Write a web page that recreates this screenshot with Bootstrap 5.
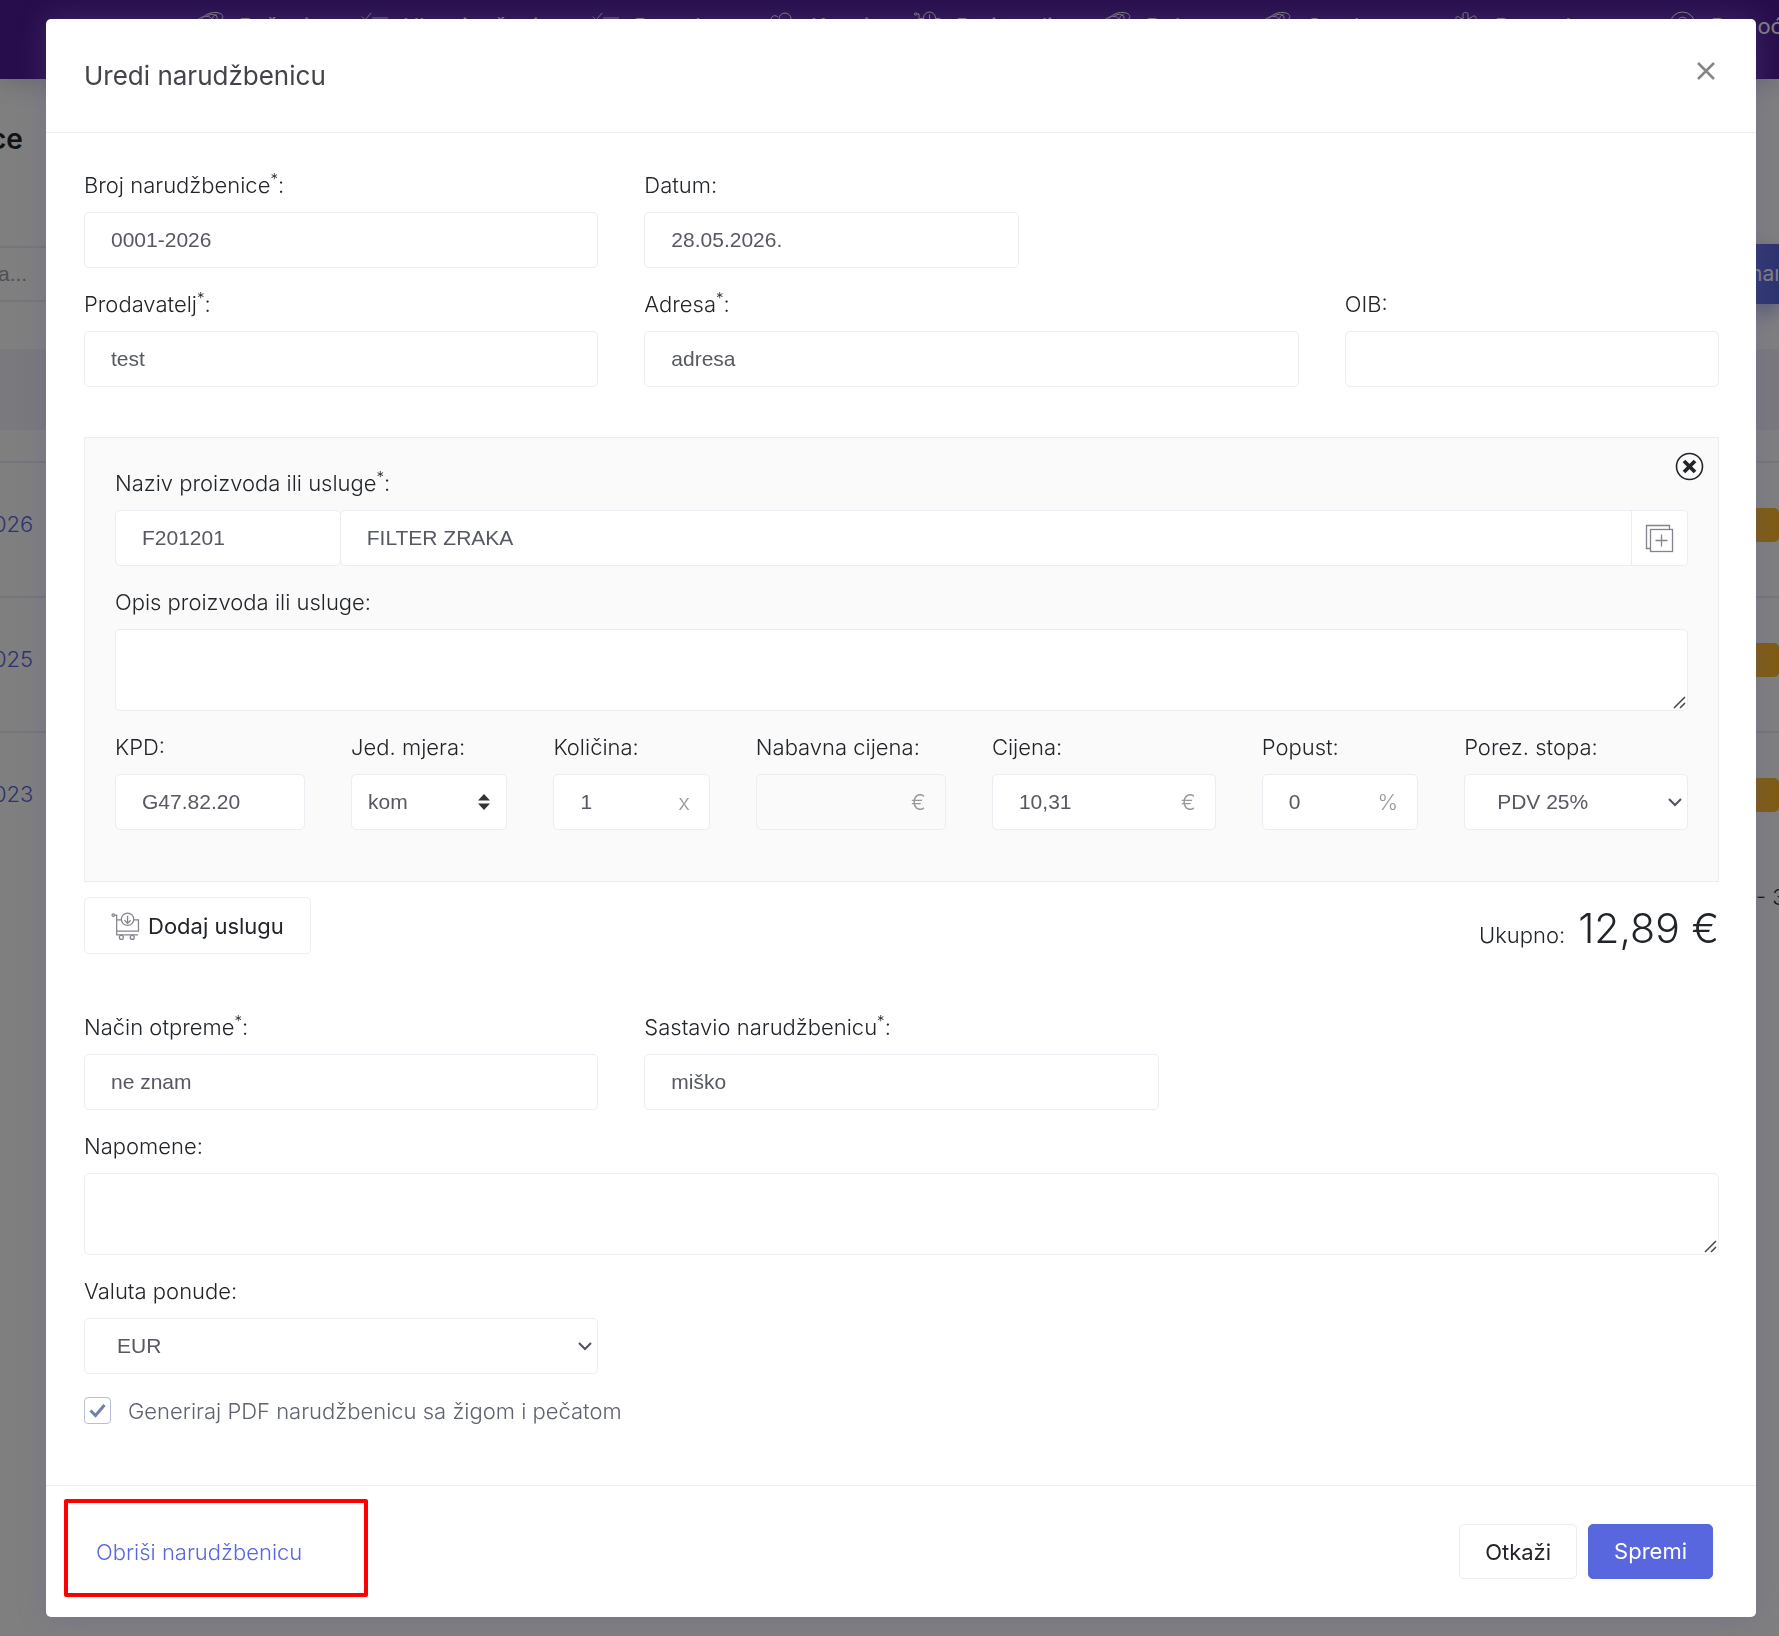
<!DOCTYPE html>
<html lang="hr">
<head>
<meta charset="utf-8">
<meta name="viewport" content="width=device-width, initial-scale=1">
<title>Uredi narudžbenicu</title>
<link href="https://cdn.jsdelivr.net/npm/bootstrap@5.3.0/dist/css/bootstrap.min.css" rel="stylesheet">
<style>
  body { font-family: Inter, "Open Sans", sans-serif; font-weight: 300; font-size: 22px; line-height: 30px; color: #212529; background: #fff; }
  svg { display: block; fill: none; stroke: currentColor; }

  /* page under the dialog */
  .page-under { height: 100vh; }
  .top-nav { background: #501a98; height: 79px; padding-left: 197px; color: #fff; font-weight: 400; display: grid; grid-template-columns: 164px 231px 177px 145px 190px 160px 189px 216px 110px; box-shadow: 0 4px 24px rgba(82, 63, 105, .25); }
  .top-nav a { color: #fff; padding-top: 11px; gap: 15px; font-size: 22px; white-space: nowrap; }
  .top-nav svg { width: 27px; height: 27px; flex: none; }
  .page-title { height: 119px; padding-top: 42px; margin-left: -10px; font-size: 28px; font-weight: 600; line-height: 36px; }
  .search-row { height: 151px; padding-top: 48px; }
  .search-strip { height: 56px; border-top: 2px solid #ebedf2; border-bottom: 2px solid #ebedf2; font: 400 21px/52px "Liberation Sans", Arial, sans-serif; color: #a0a0a8; }
  .search-strip span { margin-left: -2px; }
  .search-strip .btn { width: 30px; height: 60px; margin-top: -4px; background: #5867dd; color: #fff; border-radius: 0; padding: 0; font: 400 21px/58px Inter, sans-serif; box-shadow: 0 8px 20px rgba(88, 103, 221, .5); overflow: hidden; }
  .list-head { height: 81px; background: #f4f3fa; }
  .list-gap { height: 31px; }
  .list-line { height: 135px; border-top: 2px solid #ebeaf6; padding-bottom: 12px; }
  .list-line a { color: #5867dd; text-decoration: none; margin-left: -7px; }
  .pill { width: 24px; height: 34px; background: #ffb822; border-radius: 0 5px 5px 0; margin-top: 3px; }
  .list-foot { height: 108px; }
  .edge { width: 23px; overflow: hidden; white-space: nowrap; flex: none; }

  /* dialog */
  .modal-backdrop.show { opacity: .5; }
  .modal-dialog { max-width: none; margin: 19px 23px 20px 46px; }
  .modal-content { border: 0; border-radius: 5px; box-shadow: 0 0 30px rgba(100, 90, 150, .35); }
  .modal-header { padding: 38px 40px 37px 38px; border-bottom: 1px solid #ebedf2; align-items: flex-start; }
  .modal-title { font-size: 26px; line-height: 38px; font-weight: 400; color: #434349; }
  .close-x { padding: 0; border: 0; background: none; color: #858585; margin-top: 4px; }
  .modal-body { padding: 37px 37px 59px 38px; }
  .modal-footer { padding: 38px; padding-right: 43px; border-top: 1px solid #ebedf2; position: relative; }
  .modal-footer > * { margin: 0; }

  .row { --bs-gutter-x: 46px; }
  .field { margin-bottom: 21px; }
  .field label.cap { display: block; margin-bottom: 12px; white-space: nowrap; }
  .cap sup { font-size: 15px; line-height: 0; top: -9px; vertical-align: baseline; font-weight: 300; }
  .form-control, .form-select { height: 56px; border: 1px solid #ebedf2; border-radius: 5px; padding: 0 26px; font: 400 21px/54px "Liberation Sans", Arial, sans-serif; color: #575962; background-color: #fff; }
  textarea.form-control { height: 82px; padding: 12px 26px; line-height: 28px; }
  textarea::-webkit-resizer { background: url("data:image/svg+xml,%3Csvg xmlns='http://www.w3.org/2000/svg' viewBox='0 0 15 15'%3E%3Cpath d='M2 13L13 2M8 13l5-5' fill='none' stroke='%23444' stroke-width='1.500'/%3E%3C/svg%3E") center / contain no-repeat; }
  .form-control:disabled { background: #fafafa; }
  .form-select { padding-left: 32px; background-position: right 5px center; background-size: 14px 10px; background-image: url("data:image/svg+xml,%3Csvg xmlns='http://www.w3.org/2000/svg' viewBox='0 0 14 10'%3E%3Cpath d='M1 2l6 6 6-6' fill='none' stroke='%2350525c' stroke-width='2'/%3E%3C/svg%3E"); }
  .form-select.unit { padding-left: 16px; background-position: right 16px center; background-size: 12px 16px; background-image: url("data:image/svg+xml,%3Csvg xmlns='http://www.w3.org/2000/svg' viewBox='0 0 12 16'%3E%3Cpath d='M6 0l6 6.500H0zM6 16l6-6.500H0z' fill='%23333'/%3E%3C/svg%3E"); }
  .suffix { position: absolute; right: 20px; top: 13px; color: #999; }

  .item-box { background: #fafafa; border: 1px solid #ebedf2; padding: 30px; margin-top: 29px; position: relative; }
  .item-close { position: absolute; top: 14px; right: 14px; padding: 0; border: 0; background: none; color: #212529; }
  .w-code { flex: 0 0 14.35% !important; border-radius: 5px !important; }
  .w-name { border-radius: 5px 0 0 5px !important; margin-left: -1px !important; }
  .btn-pick { width: 57px; border: 1px solid #ebedf2; border-left: 0; background: #fff; border-radius: 0 5px 5px 0; padding: 0; color: #83838f; display: flex; align-items: center; justify-content: center; }
  .c-175 { flex: 0 0 14.583%; }
  .c-15 { flex: 0 0 12.5%; }
  .c-2 { flex: 0 0 16.667%; }

  .btn-plain { height: 57px; border: 1px solid #ebedf2; border-radius: 5px; background: #fff; color: #212529; font-size: 22px; line-height: 30px; padding: 0 26px; }
  .modal-footer .btn { height: 55px; padding: 0 25px; }
  .foot-actions { gap: 11px; }
  .btn-save { background: #5867dd; color: #fff; font-size: 22px; border: 1px solid #5867dd; border-radius: 5px; }
  .sum-line { margin-top: 15px; }
  .sum-line strong { font-size: 41px; font-weight: 300; line-height: 44px; }
  .sum-total { gap: 13px; padding-top: 9px; }
  .after-sum { margin-top: 58px; }
  .stamp { padding-top: 1px; }
  .stamp .form-check-input { width: 27px; height: 27px; margin: 1px 17px 0 0; border: 1px solid #b9c0d8; border-radius: 4px; flex: none; float: none; }
  .stamp .form-check-input:checked { background-color: #fff; border-color: #b9c0d8; background-size: 17px 15px; background-image: url("data:image/svg+xml,%3Csvg xmlns='http://www.w3.org/2000/svg' viewBox='0 0 17 15'%3E%3Cpath d='M1.500 7.500l5 5L15.500 2' fill='none' stroke='%236f80ab' stroke-width='3'/%3E%3C/svg%3E"); }
  .stamp label { color: #5f6270; }
  .link-del { color: #5867dd; text-decoration: none; padding-left: 12px; }
  .frame-red { position: absolute; left: 18px; top: 13px; width: 304px; bottom: 20px; border: 4px solid #f00; border-radius: 2px; pointer-events: none; }
</style>
</head>
<body class="overflow-hidden">

<svg width="0" height="0" class="position-absolute">
  <symbol id="i-world" viewBox="0 0 27 27"><path d="M2 12C5 5 12 1 19 1.500c6 .5 7.500 3 6.500 6M1 8.500C5 5 12 4 15 8M9 6c4-4 10-3 11 0s-3 4-4 2 1-4 4-4M3 13c0 7 5 12 11 12s11-5 11-12V7"/></symbol>
  <symbol id="i-list" viewBox="0 0 29 27"><path d="M1 5l3.500 3.500L11 1M12 6.500h17M1 14l3.500 3.500L11 11M12 15h17M12 23h17"/></symbol>
  <symbol id="i-users" viewBox="0 0 27 27"><circle cx="16" cy="8" r="6"/><path d="M2 9c0-5 5-5 7-3M1 25c0-6 3-9 7-9M7 26c0-7 4-10 9-10s9 3 9 10"/></symbol>
  <symbol id="i-cart" viewBox="0 0 27 27"><circle cx="1.700" cy="3" r="1.200"/><path d="M3 3h2v15.500h21V7.500h-4.500M5 7.500h5M5 18.500v3.500h20.500"/><circle cx="15.500" cy="7" r="6"/><path d="M15.500 3.500v7M12.500 8l3 3 3-3"/><circle cx="9.500" cy="24.500" r="1.900"/><circle cx="20" cy="24.500" r="1.900"/></symbol>
  <symbol id="i-gear" viewBox="0 0 27 27"><path d="M3 13V7c0-2 3-2 4 0l3 1V3c0-2 5-2 5 0v5l4-2c1-2 5-1 4 1v6M3 13v10h21V13"/></symbol>
  <symbol id="i-help" viewBox="0 0 27 27"><circle cx="13.500" cy="13.500" r="12.500"/><path d="M9 10c0-5 9-5 9 0 0 4-4.500 3-4.500 7M13.500 20v2"/></symbol>
</svg>

<div class="page-under overflow-hidden">
  <nav class="top-nav">
    <a class="d-flex text-decoration-none" href="#"><svg><use href="#i-world"/></svg>Računi</a>
    <a class="d-flex text-decoration-none" href="#"><svg><use href="#i-list"/></svg>Ulazni računi</a>
    <a class="d-flex text-decoration-none" href="#"><svg><use href="#i-list"/></svg>Ponude</a>
    <a class="d-flex text-decoration-none" href="#"><svg><use href="#i-users"/></svg>Kupci</a>
    <a class="d-flex text-decoration-none" href="#"><svg><use href="#i-cart"/></svg>Proizvodi</a>
    <a class="d-flex text-decoration-none" href="#"><svg><use href="#i-world"/></svg>Dok</a>
    <a class="d-flex text-decoration-none" href="#"><svg><use href="#i-world"/></svg>Ostalo</a>
    <a class="d-flex text-decoration-none" href="#"><svg><use href="#i-gear"/></svg>Postavke</a>
    <a class="d-flex text-decoration-none" href="#"><svg><use href="#i-help"/></svg>Pomoć</a>
  </nav>
  <div class="page-title">ce</div>
  <div class="search-row">
    <div class="search-strip d-flex justify-content-between"><span>a...</span><button class="btn" type="button">nar</button></div>
  </div>
  <div class="list-head"></div>
  <div class="list-gap"></div>
  <div class="list-line d-flex justify-content-between align-items-center"><a href="#">026</a><span class="pill"></span></div>
  <div class="list-line d-flex justify-content-between align-items-center"><a href="#">025</a><span class="pill"></span></div>
  <div class="list-line d-flex justify-content-between align-items-center"><a href="#">023</a><span class="pill"></span></div>
  <div class="list-foot d-flex justify-content-end pt-3"><span class="edge">- 3</span></div>
</div>

<div class="modal d-block" tabindex="-1" role="dialog" aria-labelledby="dlg-title">
  <div class="modal-dialog">
    <form class="modal-content">
      <div class="modal-header justify-content-between">
        <h5 class="modal-title" id="dlg-title">Uredi narudžbenicu</h5>
        <button type="button" class="close-x" aria-label="Zatvori"><svg width="20" height="20" viewBox="0 0 20 20" stroke-width="2.500"><path d="M2 2l16 16M18 2L2 18"/></svg></button>
      </div>

      <div class="modal-body">
        <div class="row">
          <div class="col-4 field"><label class="cap" for="f-no">Broj narudžbenice<sup>*</sup>:</label><input class="form-control" id="f-no" value="0001-2026"></div>
          <div class="col-3 field"><label class="cap" for="f-date">Datum:</label><input class="form-control" id="f-date" value="28.05.2026."></div>
        </div>
        <div class="row">
          <div class="col-4 field"><label class="cap" for="f-seller">Prodavatelj<sup>*</sup>:</label><input class="form-control" id="f-seller" value="test"></div>
          <div class="col-5 field"><label class="cap" for="f-addr">Adresa<sup>*</sup>:</label><input class="form-control" id="f-addr" value="adresa"></div>
          <div class="col-3 field"><label class="cap" for="f-oib">OIB:</label><input class="form-control" id="f-oib"></div>
        </div>

        <div class="item-box">
          <button type="button" class="item-close" aria-label="Ukloni"><svg width="29" height="29" viewBox="0 0 29 29"><circle cx="14.500" cy="14.500" r="13" stroke-width="1.600"/><path d="M9 9l11 11M20 9L9 20" stroke-width="3.800"/></svg></button>
          <div class="field">
            <label class="cap" for="f-name">Naziv proizvoda ili usluge<sup>*</sup>:</label>
            <div class="input-group flex-nowrap">
              <input class="form-control w-code" aria-label="Šifra" value="F201201">
              <input class="form-control w-name" id="f-name" value="FILTER ZRAKA">
              <button type="button" class="btn-pick" aria-label="Odaberi"><svg width="29" height="29" viewBox="0 0 29 29" stroke-width="1.300"><path d="M5 24.500H1.500V1.500h23V5"/><rect x="5.500" y="5.500" width="22" height="22"/><path d="M16.500 10.500v12M10.500 16.500h12"/></svg></button>
            </div>
          </div>
          <div class="field">
            <label class="cap" for="f-desc">Opis proizvoda ili usluge:</label>
            <textarea class="form-control" id="f-desc"></textarea>
          </div>
          <div class="row">
            <div class="c-175 field"><label class="cap" for="f-kpd">KPD:</label><input class="form-control" id="f-kpd" value="G47.82.20"></div>
            <div class="c-15 field"><label class="cap" for="f-unit">Jed. mjera:</label><select class="form-select unit" id="f-unit"><option>kom</option></select></div>
            <div class="c-15 field"><label class="cap" for="f-qty">Količina:</label><div class="position-relative"><input class="form-control" id="f-qty" value="1"><span class="suffix">x</span></div></div>
            <div class="c-175 field"><label class="cap" for="f-cost">Nabavna cijena:</label><div class="position-relative"><input class="form-control" id="f-cost" disabled><span class="suffix">€</span></div></div>
            <div class="c-2 field"><label class="cap" for="f-price">Cijena:</label><div class="position-relative"><input class="form-control" id="f-price" value="10,31"><span class="suffix">€</span></div></div>
            <div class="c-15 field"><label class="cap" for="f-disc">Popust:</label><div class="position-relative"><input class="form-control" id="f-disc" value="0"><span class="suffix">%</span></div></div>
            <div class="c-2 field"><label class="cap" for="f-tax">Porez. stopa:</label><select class="form-select" id="f-tax"><option>PDV 25%</option></select></div>
          </div>
        </div>

        <div class="d-flex justify-content-between align-items-start sum-line">
          <button type="button" class="btn btn-plain d-flex align-items-center gap-2"><svg width="29" height="28" stroke-width="1.200" color="#83838f"><use href="#i-cart"/></svg>Dodaj uslugu</button>
          <div class="d-flex align-items-baseline sum-total"><span>Ukupno:</span><strong>12,89 €</strong></div>
        </div>

        <div class="row after-sum">
          <div class="col-4 field"><label class="cap" for="f-ship">Način otpreme<sup>*</sup>:</label><input class="form-control" id="f-ship" value="ne znam"></div>
          <div class="col-4 field"><label class="cap" for="f-author">Sastavio narudžbenicu<sup>*</sup>:</label><input class="form-control" id="f-author" value="miško"></div>
        </div>
        <div class="field">
          <label class="cap" for="f-note">Napomene:</label>
          <textarea class="form-control" id="f-note"></textarea>
        </div>
        <div class="row">
          <div class="col-4 field"><label class="cap" for="f-cur">Valuta ponude:</label><select class="form-select" id="f-cur"><option>EUR</option></select></div>
        </div>
        <div class="stamp d-flex">
          <input class="form-check-input" type="checkbox" id="f-stamp" checked>
          <label for="f-stamp">Generiraj PDF narudžbenicu sa žigom i pečatom</label>
        </div>
      </div>

      <div class="modal-footer justify-content-between">
        <a class="link-del" href="#">Obriši narudžbenicu</a>
        <div class="d-flex foot-actions">
          <button type="button" class="btn btn-plain">Otkaži</button>
          <button type="submit" class="btn btn-save">Spremi</button>
        </div>
        <div class="frame-red"></div>
      </div>
    </form>
  </div>
</div>
<div class="modal-backdrop show"></div>

<script src="https://cdn.jsdelivr.net/npm/bootstrap@5.3.0/dist/js/bootstrap.bundle.min.js"></script>
</body>
</html>
